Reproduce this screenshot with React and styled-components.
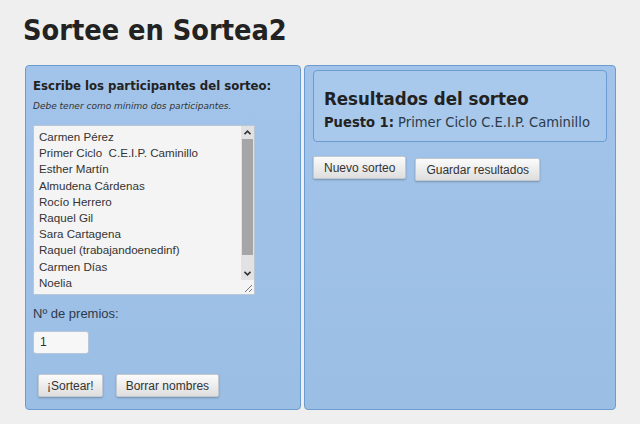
import React from "react";
import styled, { createGlobalStyle } from "styled-components";

const Global = createGlobalStyle`
  html, body {
    margin: 0;
    padding: 0;
    background: #efefef;
  }
  body {
    font-family: "Liberation Sans", Arial, sans-serif;
    color: #333;
  }
`;

const Page = styled.div`
  width: 640px;
  height: 424px;
  overflow: hidden;
  padding: 0 0 0 25px;
  box-sizing: border-box;
`;

const Title = styled.h1`
  margin: 0 0 0 -2px;
  padding-top: 13px;
  height: 65px;
  box-sizing: border-box;
  font-family: "DejaVu Sans Condensed", "DejaVu Sans", sans-serif;
  font-weight: bold;
  font-size: 28.6px;
  line-height: 34px;
  color: #222;
`;

const Columns = styled.div`
  display: flex;
  gap: 3px;
`;

const Panel = styled.section`
  width: ${(p) => p.$w}px;
  height: 345px;
  box-sizing: border-box;
  border: 1px solid #6c9bd0;
  border-radius: 4px;
  background: linear-gradient(#a2c4ea, #9bbee5);
  padding: ${(p) => p.$pad};
  display: flex;
  flex-direction: column;
`;

const Heading = styled.h2`
  margin: 0;
  font-family: "DejaVu Sans Condensed", "DejaVu Sans", sans-serif;
  font-weight: bold;
  font-size: 13px;
  color: #222;
`;

const Hint = styled.p`
  margin: 8px 0 0;
  font-family: "DejaVu Sans", sans-serif;
  font-style: italic;
  font-size: 9px;
  color: #333;
`;

const ListBox = styled.div`
  margin-top: 14px;
  width: 222px;
  height: 170px;
  box-sizing: border-box;
  border: 1px solid #b9c6d6;
  background: #f4f4f4;
  display: flex;
  position: relative;
`;

const Names = styled.div`
  flex: 1;
  padding: 3px 0 0 5px;
  font-size: 11.6px;
  line-height: 16.2px;
  color: #333;
  white-space: pre;
`;

const Scrollbar = styled.div`
  width: 13px;
  height: 154px;
  background: #e2e2e2;
  display: flex;
  flex-direction: column;
  align-items: center;
`;

const Arrow = styled.div`
  height: 13px;
  width: 13px;
  display: flex;
  align-items: center;
  justify-content: center;
`;

const Thumb = styled.div`
  width: 11px;
  flex: 1;
  margin: 0 0 12px;
  background: #a6a6a6;
`;

const Grip = styled.div`
  position: absolute;
  right: 0;
  bottom: 0;
  width: 13px;
  height: 14px;
  background: #f4f4f4;
`;

const Label = styled.div`
  margin-top: 11px;
  font-size: 13px;
  color: #2d3a4a;
`;

const Field = styled.div`
  margin-top: 10px;
  width: 56px;
  height: 23px;
  box-sizing: border-box;
  border: 1px solid #b8c8dc;
  border-radius: 3px;
  background: #f7f7f7;
  font-size: 12px;
  line-height: 21px;
  padding-left: 6px;
  color: #333;
`;

const ButtonRow = styled.div`
  display: flex;
  gap: ${(p) => p.$gap}px;
  margin: ${(p) => p.$m};
  align-items: flex-start;
`;

const Button = styled.button`
  height: 23px;
  padding: 0 ${(p) => p.$px || 9}px;
  margin-top: ${(p) => p.$mt || 0}px;
  border: 1px solid #c3c9d0;
  border-radius: 2px;
  background: linear-gradient(#fbfbfb, #dedede);
  box-shadow: 0 1px 2px rgba(0, 0, 0, 0.25);
  font-family: "Liberation Sans", Arial, sans-serif;
  font-size: 12px;
  color: #333;
`;

const ResultBox = styled.div`
  height: 72px;
  box-sizing: border-box;
  border: 1px solid #6c9bd0;
  border-radius: 4px;
  background: #a8c9ec;
  padding: 17px 0 0 10px;
`;

const ResultTitle = styled.h2`
  margin: 0;
  font-family: "DejaVu Sans Condensed", "DejaVu Sans", sans-serif;
  font-weight: bold;
  font-size: 18.5px;
  line-height: 22px;
  color: #222;
`;

const ResultLine = styled.div`
  margin-top: 3px;
  font-family: "DejaVu Sans Condensed", "DejaVu Sans", sans-serif;
  font-size: 14.6px;
  line-height: 18px;
  color: #2d3a4a;
  b {
    color: #222;
  }
`;

const names = [
  "Carmen Pérez",
  "Primer Ciclo  C.E.I.P. Caminillo",
  "Esther Martín",
  "Almudena Cárdenas",
  "Rocío Herrero",
  "Raquel Gil",
  "Sara Cartagena",
  "Raquel (trabajandoenedinf)",
  "Carmen Días",
  "Noelia",
];

function Chevron({ up }) {
  return (
    <svg width="7" height="5" viewBox="0 0 7 5">
      <path
        d={up ? "M0.5 4.2 L3.5 1.2 L6.5 4.2" : "M0.5 0.8 L3.5 3.8 L6.5 0.8"}
        fill="none"
        stroke="#333"
        strokeWidth="1.6"
      />
    </svg>
  );
}

export default function App() {
  return (
    <Page>
      <Global />
      <Title>Sortee en Sortea2</Title>
      <Columns>
        <Panel $w={276} $pad="12px 0 0 7px">
          <Heading>Escribe los participantes del sorteo:</Heading>
          <Hint>Debe tener como mínimo dos participantes.</Hint>
          <ListBox>
            <Names>{names.join("\n")}</Names>
            <Scrollbar>
              <Arrow>
                <Chevron up />
              </Arrow>
              <Thumb />
              <Arrow>
                <Chevron />
              </Arrow>
            </Scrollbar>
            <Grip>
              <svg width="13" height="14" viewBox="0 0 13 14">
                <path d="M4 12 L11 5 M8 12 L11 9" stroke="#777" strokeWidth="1" />
              </svg>
            </Grip>
          </ListBox>
          <Label>Nº de premios:</Label>
          <Field>1</Field>
          <ButtonRow $gap={13} $m="20px 0 0 5px">
            <Button $px={8}>¡Sortear!</Button>
            <Button $px={9}>Borrar nombres</Button>
          </ButtonRow>
        </Panel>
        <Panel $w={312} $pad="4px 8px 0 8px">
          <ResultBox>
            <ResultTitle>Resultados del sorteo</ResultTitle>
            <ResultLine>
              <b>Puesto 1:</b> Primer Ciclo C.E.I.P. Caminillo
            </ResultLine>
          </ResultBox>
          <ButtonRow $gap={9} $m="14px 0 0 0">
            <Button $px={10}>Nuevo sorteo</Button>
            <Button $px={10} $mt={2}>Guardar resultados</Button>
          </ButtonRow>
        </Panel>
      </Columns>
    </Page>
  );
}
